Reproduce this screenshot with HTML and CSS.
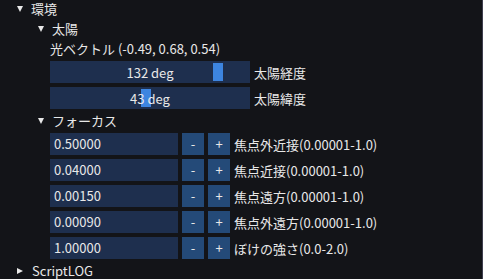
FILE: index.html
```html
<!DOCTYPE html>
<html lang="ja">
<head>
<meta charset="utf-8">
<link rel="stylesheet" href="styles.css">
</head>
<body>
<div class="panel">
  <div class="tree l1"><span class="arrow down"></span><span>環境</span></div>
  <div class="tree l2"><span class="arrow down"></span><span>太陽</span></div>
  <div class="text l2c">光ベクトル (-0.49, 0.68, 0.54)</div>
  <div class="row l2c">
    <div class="slider"><span class="grab" style="left:163px"></span><span class="val">132 deg</span></div>
    <span class="label">太陽経度</span>
  </div>
  <div class="row l2c">
    <div class="slider"><span class="grab" style="left:91px"></span><span class="val">43 deg</span></div>
    <span class="label">太陽緯度</span>
  </div>
  <div class="tree l2"><span class="arrow down"></span><span>フォーカス</span></div>
  <div class="row l2c">
    <div class="input">0.50000</div><div class="btn">-</div><div class="btn">+</div>
    <span class="label">焦点外近接(0.00001-1.0)</span>
  </div>
  <div class="row l2c">
    <div class="input">0.04000</div><div class="btn">-</div><div class="btn">+</div>
    <span class="label">焦点近接(0.00001-1.0)</span>
  </div>
  <div class="row l2c">
    <div class="input">0.00150</div><div class="btn">-</div><div class="btn">+</div>
    <span class="label">焦点遠方(0.00001-1.0)</span>
  </div>
  <div class="row l2c">
    <div class="input">0.00090</div><div class="btn">-</div><div class="btn">+</div>
    <span class="label">焦点外遠方(0.00001-1.0)</span>
  </div>
  <div class="row l2c">
    <div class="input">1.00000</div><div class="btn">-</div><div class="btn">+</div>
    <span class="label">ぼけの強さ(0.0-2.0)</span>
  </div>
  <div class="tree l1"><span class="arrow right"></span><span>ScriptLOG</span></div>
</div>
</body>
</html>
```

FILE: styles.css
```css
html, body {
  margin: 0;
  padding: 0;
  width: 483px;
  height: 279px;
  overflow: hidden;
  background: #131418;
}
body {
  font-family: "Noto Sans CJK JP", "Noto Sans", sans-serif;
  font-size: 13px;
  color: #e8e8e8;
}
.panel {
  box-sizing: border-box;
  width: 483px;
  height: 279px;
  border-right: 1px solid #3e3e4e;
  padding-top: 1px;
  display: flex;
  flex-direction: column;
  gap: 4px;
}
.tree, .text {
  height: 16px;
  line-height: 16px;
  display: flex;
  align-items: center;
  white-space: nowrap;
}
.l1 { padding-left: 17px; }
.l2 { padding-left: 38px; }
.l2c { padding-left: 50px; }
.arrow {
  width: 0;
  height: 0;
  display: inline-block;
  flex: none;
}
.arrow.down {
  border-left: 3.5px solid transparent;
  border-right: 3.5px solid transparent;
  border-top: 6px solid #e8e8e8;
  margin-right: 8px;
}
.arrow.right {
  border-top: 3.5px solid transparent;
  border-bottom: 3.5px solid transparent;
  border-left: 6px solid #e8e8e8;
  margin-right: 9px;
}
.l1 .arrow.down { margin-right: 8px; }
.l2 .arrow.down { margin-right: 8px; }
.row {
  height: 22px;
  display: flex;
  align-items: center;
  gap: 4px;
  white-space: nowrap;
}
.slider {
  position: relative;
  width: 200px;
  height: 22px;
  background: #1e2f4e;
  display: flex;
  align-items: center;
  justify-content: center;
}
.grab {
  position: absolute;
  top: 2px;
  bottom: 2px;
  width: 10px;
  background: #3d85e0;
}
.val {
  position: relative;
}
.input {
  box-sizing: border-box;
  width: 128px;
  height: 22px;
  line-height: 22px;
  padding-left: 4px;
  background: #1e2f4e;
}
.btn {
  width: 22px;
  height: 22px;
  line-height: 22px;
  text-align: center;
  background: #244a78;
}
.label {
  margin-left: 0;
}
```
